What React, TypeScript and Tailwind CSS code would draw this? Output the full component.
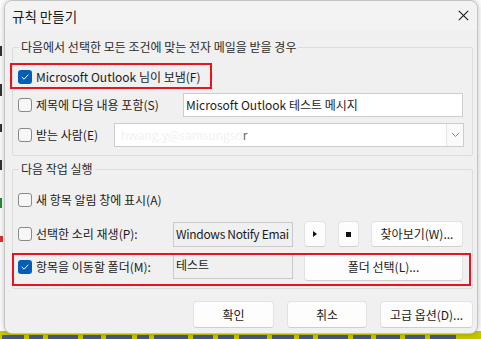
import React from "react";

const FONT = "font-['Segoe_UI','Noto_Sans_CJK_KR',sans-serif]";

function Check({ checked }: { checked?: boolean }) {
  if (checked) {
    return (
      <div className="w-[14px] h-[14px] rounded-[3px] bg-[#005fb8] flex items-center justify-center shrink-0">
        <svg width="10" height="10" viewBox="0 0 10 10">
          <path d="M2 5.2 L4.1 7.2 L8 3" fill="none" stroke="#ffffff" strokeWidth="1" strokeLinecap="round" strokeLinejoin="round" />
        </svg>
      </div>
    );
  }
  return <div className="w-[14px] h-[14px] rounded-[3px] border border-[#8a8a8a] bg-[#f7f7f7] shrink-0" />;
}

function Btn({ children, className = "" }: { children?: React.ReactNode; className?: string }) {
  return (
    <div
      className={
        "flex items-center justify-center bg-[#fdfdfd] border border-[#e2e2e2] border-b-[#cfcfcf] rounded-[4px] text-[12px] text-[#1b1b1b] " +
        className
      }
    >
      {children}
    </div>
  );
}

export default function App() {
  const dashes = [22, 14, 30, 18, 26, 12, 34, 20, 16, 28, 22, 14, 30, 18, 24, 20, 26];
  return (
    <div className={"relative w-[481px] h-[339px] overflow-hidden bg-white " + FONT}>
      {/* background window fragments */}
      <div className="absolute left-0 right-0 bottom-0 h-[8px] bg-[#c8c800] flex items-end gap-[5px] pl-[2px] overflow-hidden">
        {dashes.map((w, i) => (
          <div key={i} style={{ width: w }} className="h-[4px] bg-[#2a3aa8] shrink-0 opacity-80" />
        ))}
      </div>
      <div className="absolute left-0 top-[40px] w-[4px] h-[300px] flex flex-col gap-[28px] pt-[6px]">
        <div className="h-[10px] w-[2px] bg-[#333]" />
        <div className="h-[12px] w-[2px] bg-[#333]" />
        <div className="h-[8px] w-[2px] bg-[#333]" />
        <div className="h-[10px] w-[2px] bg-[#333]" />
        <div className="h-[10px] w-[2px] bg-[#2a8a3a]" />
        <div className="h-[6px] w-[3px] bg-[#d33]" />
      </div>

      {/* dialog window */}
      <div className="absolute left-[4px] top-0 w-[474px] h-[334px] rounded-[8px] border border-[#c4c4c4] bg-[#f0f0f0] flex flex-col shadow-[0_0_6px_rgba(0,0,0,0.25)]">
        {/* title bar */}
        <div className="h-[29px] shrink-0 flex items-center justify-between pl-[7px] pr-[8px] rounded-t-[8px] bg-[#f3f3f3]">
          <div className="text-[13.5px] text-[#1b1b1b] leading-[16px] pt-[1px]">규칙 만들기</div>
          <svg width="11" height="11" viewBox="0 0 11 11">
            <path d="M0.8 0.8 L10.2 10.2 M10.2 0.8 L0.8 10.2" stroke="#1b1b1b" strokeWidth="1.1" />
          </svg>
        </div>

        {/* group 1 */}
        <div className="mt-[17px] ml-[7px] mr-[4px] border border-[#dcdcdc] rounded-[2px] pl-[5px] pb-[8px] text-[12px] text-[#1b1b1b]">
          <div className="-mt-[9px] ml-[1px] px-[2px] w-fit bg-[#f0f0f0] leading-[16px] text-[#2b2b2b]">
            다음에서 선택한 모든 조건에 맞는 전자 메일을 받을 경우
          </div>
          <div className="mt-[10px] h-[24px] flex items-center gap-[4px]">
            <Check checked />
            <span>Microsoft Outlook 님이 보냄(F)</span>
          </div>
          <div className="mt-[4px] h-[24px] flex items-center">
            <div className="w-[165px] flex items-center gap-[4px]">
              <Check />
              <span>제목에 다음 내용 포함(S)</span>
            </div>
            <div className="w-[280px] h-[24px] bg-white border border-[#cdcdcd] flex items-center pl-[2px]">
              Microsoft Outlook 테스트 메시지
            </div>
          </div>
          <div className="mt-[6px] h-[24px] flex items-center">
            <div className="w-[96px] flex items-center gap-[4px]">
              <Check />
              <span>받는 사람(E)</span>
            </div>
            <div className="w-[350px] h-[24px] bg-white border border-[#cdcdcd] flex items-center justify-between">
              <span className="pl-[6px] text-[#f1f1f1]">
                hwang.y@samsungsd<span className="text-[#666]">r</span>
              </span>
              <div className="w-[17px] h-[22px] border-l border-[#e6e6e6] bg-[#fafafa] flex items-center justify-center">
                <svg width="9" height="6" viewBox="0 0 9 6">
                  <path d="M1 1 L4.5 4.5 L8 1" fill="none" stroke="#8a8a8a" strokeWidth="1" />
                </svg>
              </div>
            </div>
          </div>
        </div>

        {/* group 2 */}
        <div className="mt-[13px] ml-[7px] mr-[4px] border border-[#dcdcdc] rounded-[2px] pl-[5px] pb-[7px] text-[12px] text-[#1b1b1b]">
          <div className="-mt-[9px] ml-[1px] px-[2px] w-fit bg-[#f0f0f0] leading-[16px] text-[#2b2b2b]">
            다음 작업 실행
          </div>
          <div className="mt-[11px] h-[24px] flex items-center gap-[4px]">
            <Check />
            <span>새 항목 알림 창에 표시(A)</span>
          </div>
          <div className="mt-[9px] h-[26px] flex items-center">
            <div className="w-[155px] flex items-center gap-[4px]">
              <Check />
              <span>선택한 소리 재생(P):</span>
            </div>
            <div className="w-[120px] h-[25px] border border-[#cacaca] flex items-center pl-[2px] overflow-hidden whitespace-nowrap tracking-[-0.3px]">
              Windows Notify Emai
            </div>
            <Btn className="ml-[11px] w-[22px] h-[26px]">
              <svg width="4" height="6" viewBox="0 0 4 6">
                <path d="M0 0 L4 3 L0 6 Z" fill="#111" />
              </svg>
            </Btn>
            <Btn className="ml-[12px] w-[21px] h-[26px]">
              <div className="w-[5px] h-[5px] bg-[#111]" />
            </Btn>
            <Btn className="ml-[12px] w-[92px] h-[26px]">찾아보기(W)...</Btn>
          </div>
          <div className="mt-[6px] h-[28px] flex items-center">
            <div className="w-[155px] flex items-center gap-[4px]">
              <Check checked />
              <span>항목을 이동할 폴더(M):</span>
            </div>
            <div className="w-[120px] h-[25px] border border-[#cacaca] flex items-start pl-[2px] pt-[1px] self-start mt-[1px]">
              테스트
            </div>
            <Btn className="ml-[11px] w-[159px] h-[28px] border-[#3d8fd6] border-b-[#3d8fd6]">폴더 선택(L)...</Btn>
          </div>
        </div>

        {/* bottom buttons */}
        <div className="mt-[12px] flex justify-end gap-[13px] pr-[4px]">
          <Btn className="w-[81px] h-[27px]">확인</Btn>
          <Btn className="w-[80px] h-[27px]">취소</Btn>
          <Btn className="w-[93px] h-[27px]">고급 옵션(D)...</Btn>
        </div>

        {/* red annotation boxes */}
        <div className="absolute left-[5px] top-[62px] w-[202px] h-[26px] border-2 border-[#e5141f] pointer-events-none" />
        <div className="absolute left-[7px] top-[252px] w-[459px] h-[33px] border-2 border-[#e5141f] pointer-events-none" />
      </div>
    </div>
  );
}
